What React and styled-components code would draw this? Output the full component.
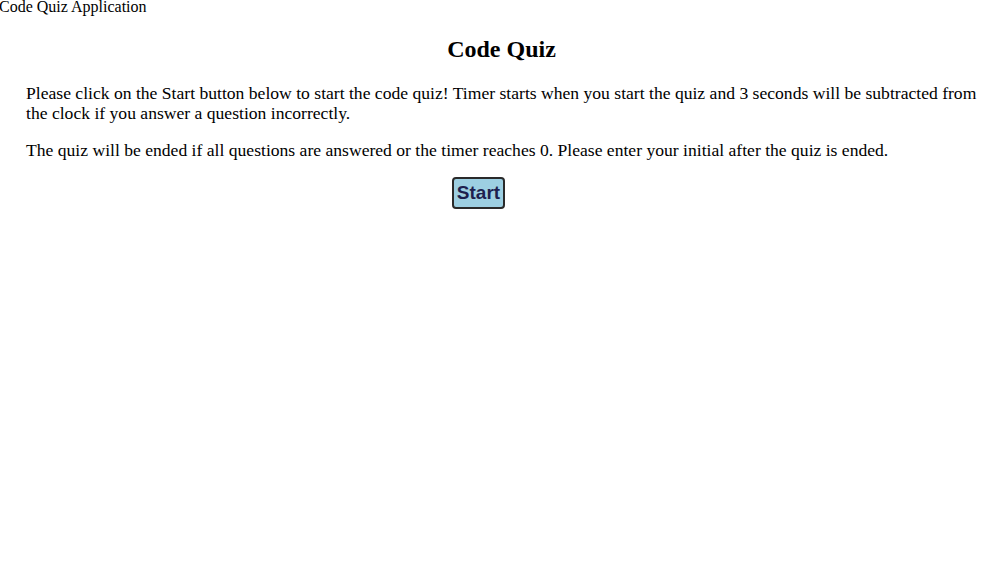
import React from "react";
import styled, { createGlobalStyle } from "styled-components";

const GlobalStyle = createGlobalStyle`
    body {
        margin: 0;
        background: #ffffff;
        color: #000000;
        font-family: "Liberation Serif", "Times New Roman", serif;
    }
`;

const Header = styled.header`
    font-size: 16px;
    line-height: 13px;
    margin-left: -1px;
    white-space: nowrap;
`;

const Main = styled.main`
    padding: 0 18px 0 26px;
`;

const Title = styled.h1`
    text-align: center;
    font-size: 24px;
    font-weight: bold;
    margin: 23px 0 20px;
    padding-right: 4px;
`;

const Text = styled.p`
    font-size: 17.6px;
    line-height: 20px;
    margin: 0 0 17px;
`;

const Actions = styled.div`
    display: flex;
    justify-content: center;
    margin-top: 2px;
    padding-right: 50px;
`;

const StartButton = styled.button`
    font-family: "Liberation Sans", Arial, sans-serif;
    font-size: 19px;
    font-weight: bold;
    color: #1e1f4f;
    background: #9dcfe2;
    border: 2px solid #2a2a2a;
    border-radius: 4px;
    height: 32px;
    padding: 0 3px;
    cursor: pointer;
`;

const App = () => (
    <>
        <GlobalStyle />
        <Header>Code Quiz Application</Header>
        <Main>
            <Title>Code Quiz</Title>
            <Text>
                Please click on the Start button below to start the code quiz! Timer starts when you start the quiz and 3 seconds will be subtracted from the clock if you answer a question incorrectly.
            </Text>
            <Text>
                The quiz will be ended if all questions are answered or the timer reaches 0. Please enter your initial after the quiz is ended.
            </Text>
            <Actions>
                <StartButton>Start</StartButton>
            </Actions>
        </Main>
    </>
);

export default App;
